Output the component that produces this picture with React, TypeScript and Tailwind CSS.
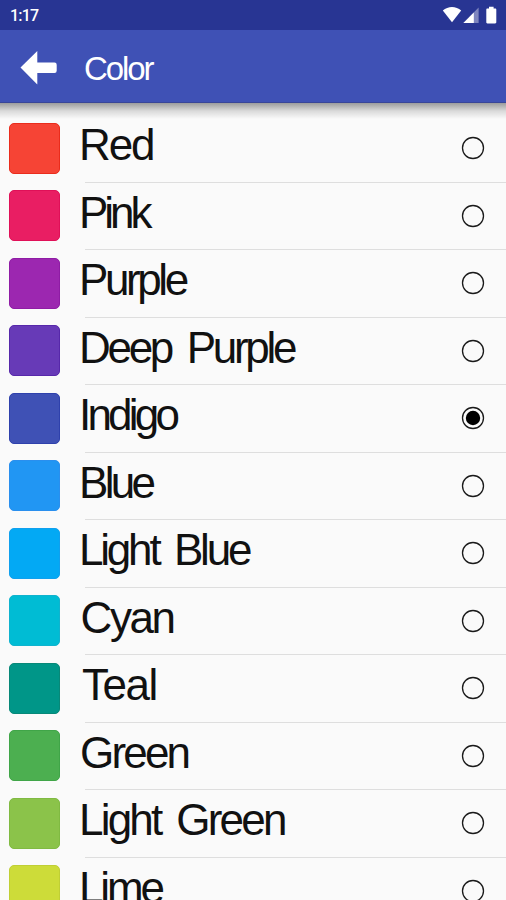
import { clsx } from "clsx";

type ColorOption = {
  name: string;
  swatch: string;
  text: string;
};

const colors: ColorOption[] = [
  { name: "Red", swatch: "bg-[#f64435] border-[#ea2c1c]", text: "tracking-[-2.1px]" },
  { name: "Pink", swatch: "bg-[#e91e63] border-[#e01058]", text: "tracking-[-4px]" },
  { name: "Purple", swatch: "bg-[#9c27b0] border-[#8f1ca5]", text: "tracking-[-3.4px]" },
  {
    name: "Deep Purple",
    swatch: "bg-[#673ab7] border-[#5728aa]",
    text: "tracking-[-3.3px] [word-spacing:6.8px]",
  },
  { name: "Indigo", swatch: "bg-[#3f51b5] border-[#2f41ac]", text: "tracking-[-3.8px]" },
  { name: "Blue", swatch: "bg-[#2196f3] border-[#2a8fee]", text: "tracking-[-3.7px]" },
  {
    name: "Light Blue",
    swatch: "bg-[#03a9f4] border-[#10a0ee]",
    text: "tracking-[-3.2px] [word-spacing:6.5px]",
  },
  { name: "Cyan", swatch: "bg-[#00bcd4] border-[#10b3ce]", text: "pl-[1.5px] tracking-[-2.4px]" },
  { name: "Teal", swatch: "bg-[#009688] border-[#088878]", text: "pl-[3px] tracking-[-1.5px]" },
  { name: "Green", swatch: "bg-[#4caf50] border-[#40a548]", text: "pl-[1px] tracking-[-2.8px]" },
  {
    name: "Light Green",
    swatch: "bg-[#8bc34a] border-[#80ba42]",
    text: "tracking-[-2.8px] [word-spacing:6.5px]",
  },
  { name: "Lime", swatch: "bg-[#cddc39] border-[#c0cf35]", text: "tracking-[-3.1px]" },
];

function StatusBar() {
  return (
    <div className="flex h-[30px] items-center justify-between bg-[#283593] pl-[10px] pr-2 text-white">
      <span className="mt-px font-['Roboto',sans-serif] text-base font-medium tracking-[-0.8px]">
        1:17
      </span>
      <svg width="56" height="20" viewBox="0 0 56 20" fill="currentColor">
        <path d="M0.8 5.6C6 0.9 14 0.9 19.2 5.6L10 17.3Z" />
        <path d="M36.6 2.5V18H21.4Z" opacity="0.4" />
        <path d="M31.8 7.4V18H21.4Z" />
        <path d="M47 1.8h4.6v1.7h1.6c.7 0 1.1.5 1.1 1.1v12.7c0 .7-.5 1.2-1.1 1.2h-7.8c-.7 0-1.1-.5-1.1-1.2V4.6c0-.6.4-1.1 1.1-1.1H47Z" />
      </svg>
    </div>
  );
}

function Header() {
  return (
    <header className="flex h-[73px] items-center border-b border-[#394698] bg-[#3f51b5] pl-5 text-white">
      <svg width="37" height="36" viewBox="0 0 37 36" fill="currentColor" className="mt-1">
        <path d="M0.5 17.5L17.3 1V12.5H34.5Q36.7 12.5 36.7 14.7V20.8Q36.7 23 34.5 23H17.3V34.5Z" />
      </svg>
      <h1 className="ml-[27px] mt-[4px] text-[33px] leading-none tracking-[-2.1px]">Color</h1>
    </header>
  );
}

function Radio({ checked }: { checked: boolean }) {
  return (
    <svg width="24" height="24" viewBox="0 0 24 24" className="shrink-0">
      <circle cx="12" cy="12" r="10.5" fill="none" stroke="#1a1a1a" strokeWidth="1.3" />
      {checked && <circle cx="12" cy="12" r="7.2" fill="black" />}
    </svg>
  );
}

function ColorRow({ color, checked }: { color: ColorOption; checked: boolean }) {
  return (
    <li className="flex h-[67.5px] pl-[9px]">
      <div className="flex h-[66.5px] items-center">
        <div className={clsx("size-[51px] rounded-[5px] border", color.swatch)} />
      </div>
      <div className="ml-[25px] flex flex-1 items-center justify-between border-b border-[#dedede] pr-[21px]">
        <span
          className={clsx(
            "-ml-[6px] -mt-[6px] whitespace-nowrap text-[44px] leading-none text-[#111]",
            color.text,
          )}
        >
          {color.name}
        </span>
        <Radio checked={checked} />
      </div>
    </li>
  );
}

export default function App() {
  return (
    <div className="flex h-screen flex-col overflow-hidden bg-[#fafafa] font-['Liberation_Sans',sans-serif]">
      <StatusBar />
      <Header />
      <main className="min-h-0 flex-1 overflow-hidden">
        <div className="-mb-1 h-4 bg-linear-to-b from-[#9c9c9c] via-[#dadada] to-[#fafafa]" />
        <ul>
          {colors.map((color) => (
            <ColorRow key={color.name} color={color} checked={color.name === "Indigo"} />
          ))}
        </ul>
      </main>
    </div>
  );
}
